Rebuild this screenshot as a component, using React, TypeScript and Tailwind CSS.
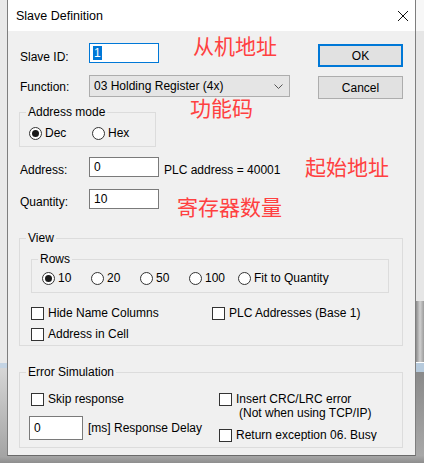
import type { ReactNode } from 'react';

interface GroupProps {
  label: string;
  className: string;
  children?: ReactNode;
}

// Windows-style group box: label sits on the top border line
function Group({ label, className, children }: GroupProps) {
  return (
    <div className={`border border-[#dcdcdc] ${className}`}>
      <div className="-mt-[8px] ml-[6px] h-[14px] w-fit bg-[#f0f0f0] px-[2px] leading-[14px]">{label}</div>
      {children}
    </div>
  );
}

function Radio({ label, checked = false }: { label: string; checked?: boolean }) {
  return (
    <div className="flex h-[14px] items-center">
      <span className="flex size-[13px] shrink-0 items-center justify-center rounded-full border border-[#333] bg-white">
        {checked && <span className="size-[7px] rounded-full bg-[#1a1a1a]" />}
      </span>
      <span className="ml-[3px] whitespace-nowrap">{label}</span>
    </div>
  );
}

function Check({ label }: { label: string }) {
  return (
    <div className="flex h-[14px] items-center">
      <span className="size-[13px] shrink-0 border border-[#333] bg-white" />
      <span className="ml-[4px] whitespace-nowrap">{label}</span>
    </div>
  );
}

function Field({ value, className }: { value: string; className: string }) {
  return <div className={`flex items-center border border-[#7a7a7a] bg-white pl-[4px] ${className}`}>{value}</div>;
}

function Note({ text, className }: { text: string; className: string }) {
  return (
    <div
      className={`absolute whitespace-nowrap font-['Noto_Sans_CJK_SC',sans-serif] text-[21px] leading-[21px] text-[#ff4040] ${className}`}
    >
      {text}
    </div>
  );
}

export default function App() {
  return (
    <div className="relative flex h-[463px] w-[424px] flex-col overflow-hidden bg-[#a0a0a0] font-['Liberation_Sans',sans-serif] text-[12px] leading-[14px] text-black">
      <div className="flex h-[456px]">
        {/* backdrop left of the dialog */}
        <div className="flex w-[7px] flex-col">
          <div className="h-[363px] bg-[#e9e9e9]" />
          <div className="h-[5px] bg-[#c4d4e4]" />
          <div className="flex-1 bg-linear-to-b from-[#d6d6d6] to-[#a4a4a4]" />
        </div>

        {/* dialog window */}
        <div className="flex w-[409px] flex-col border-x border-b border-x-[#7e7e7e] border-b-[#6a6a6a]">
          <div className="flex h-[31px] items-center justify-between bg-white pl-[8px] pr-[7px]">
            <span className="text-[12.5px]">Slave Definition</span>
            <svg width="12" height="12" viewBox="0 0 12 12" className="mr-[-1px]">
              <path d="M1 1 L11 11 M11 1 L1 11" stroke="#111" strokeWidth="1" />
            </svg>
          </div>

          <div className="flex flex-1 flex-col bg-[#f0f0f0] px-[12px]">
            <div className="flex items-start">
              <div className="flex flex-col">
                <div className="mt-[12px] flex h-[20px] items-center">
                  <span className="w-[69px] translate-y-[4px]">Slave ID:</span>
                  <div className="flex h-[20px] w-[70px] items-center border border-[#0078d7] bg-white pl-[3px]">
                    <span className="h-[14px] bg-[#0078d7] px-[1px] text-white">1</span>
                  </div>
                </div>

                <div className="mt-[12px] flex h-[22px] items-center">
                  <span className="w-[69px] translate-y-[1px]">Function:</span>
                  <div className="flex h-[22px] w-[201px] items-center justify-between border border-[#adadad] bg-[#e5e5e5] pl-[4px] pr-[6px]">
                    <span>03 Holding Register (4x)</span>
                    <svg width="9" height="5" viewBox="0 0 9 5">
                      <path d="M0.5 0.5 L4.5 4.5 L8.5 0.5" fill="none" stroke="#555" strokeWidth="1" />
                    </svg>
                  </div>
                </div>

                <Group label="Address mode" className="-ml-px mt-[15px] h-[35px] w-[137px]">
                  <div className="ml-[9px] mt-[7px] flex">
                    <div className="w-[63px]">
                      <Radio label="Dec" checked />
                    </div>
                    <Radio label="Hex" />
                  </div>
                </Group>

                <div className="mt-[10px] flex h-[20px] items-center">
                  <span className="w-[69px] translate-y-[3px]">Address:</span>
                  <Field value="0" className="h-[20px] w-[70px]" />
                  <span className="ml-[5px] translate-y-[3px]">PLC address = 40001</span>
                </div>

                <div className="mt-[12px] flex h-[20px] items-center">
                  <span className="w-[69px] translate-y-[3px]">Quantity:</span>
                  <Field value="10" className="h-[20px] w-[70px]" />
                </div>
              </div>

              <div className="ml-auto mt-[13px] flex w-[85px] flex-col">
                <div className="flex h-[23px] items-center justify-center border-2 border-[#0078d7] bg-[#e1e1e1]">OK</div>
                <div className="mt-[9px] flex h-[23px] items-center justify-center border border-[#adadad] bg-[#e1e1e1]">
                  Cancel
                </div>
              </div>
            </div>

            <Group label="View" className="-ml-px mt-[29px] h-[108px] w-[384px]">
              <Group label="Rows" className="ml-[11px] mt-[14px] h-[34px] w-[358px]">
                <div className="ml-[10px] mt-[5px] flex">
                  <div className="w-[49px]">
                    <Radio label="10" checked />
                  </div>
                  <div className="w-[49px]">
                    <Radio label="20" />
                  </div>
                  <div className="w-[49px]">
                    <Radio label="50" />
                  </div>
                  <div className="w-[49px]">
                    <Radio label="100" />
                  </div>
                  <Radio label="Fit to Quantity" />
                </div>
              </Group>

              <div className="ml-[11px] mt-[13px] grid grid-cols-[181px_1fr] gap-y-[7px]">
                <Check label="Hide Name Columns" />
                <Check label="PLC Addresses (Base 1)" />
                <Check label="Address in Cell" />
              </div>
            </Group>

            <Group label="Error Simulation" className="-ml-px mt-[26px] h-[76px] w-[384px]">
              <div className="flex">
                <div className="flex w-[199px] flex-col">
                  <div className="ml-[11px] mt-[13px]">
                    <Check label="Skip response" />
                  </div>
                  <div className="ml-[9px] mt-[10px] flex h-[24px] items-center">
                    <Field value="0" className="h-[24px] w-[54px]" />
                    <span className="ml-[5px]">[ms] Response Delay</span>
                  </div>
                </div>
                <div className="flex flex-col">
                  <div className="mt-[13px]">
                    <Check label="Insert CRC/LRC error" />
                  </div>
                  <div className="ml-[20px] h-[14px]">(Not when using TCP/IP)</div>
                  <div className="mt-[8px] flex h-[14px] items-center">
                    <span className="size-[13px] shrink-0 border border-[#333] bg-white" />
                    <span className="ml-[4px] h-[13px] self-start overflow-hidden whitespace-nowrap">
                      Return exception 06. Busy
                    </span>
                  </div>
                </div>
              </div>
            </Group>
          </div>
        </div>

        {/* backdrop right of the dialog */}
        <div className="flex w-[8px] flex-col">
          <div className="h-[31px] bg-[#f7f7f7]" />
          <div className="h-[270px] bg-[#e6e6e6]" />
          <div className="h-[61px] bg-linear-to-r from-[#8c8c8c] via-[#d0d0d0] to-[#9c9c9c]" />
          <div className="h-[1px] bg-white" />
          <div className="h-[9px] bg-[#b6cadc]" />
          <div className="flex-1 bg-linear-to-b from-[#8a8a8a] to-[#a8a8a8]" />
        </div>
      </div>

      {/* backdrop below the dialog */}
      <div className="h-[7px] bg-linear-to-b from-[#a6a6a6] to-[#8e8e8e]" />

      {/* red annotations written over the dialog */}
      <Note text="从机地址" className="left-[193px] top-[35px]" />
      <Note text="功能码" className="left-[190px] top-[97px]" />
      <Note text="起始地址" className="left-[305px] top-[156px]" />
      <Note text="寄存器数量" className="left-[177px] top-[196px]" />
    </div>
  );
}
